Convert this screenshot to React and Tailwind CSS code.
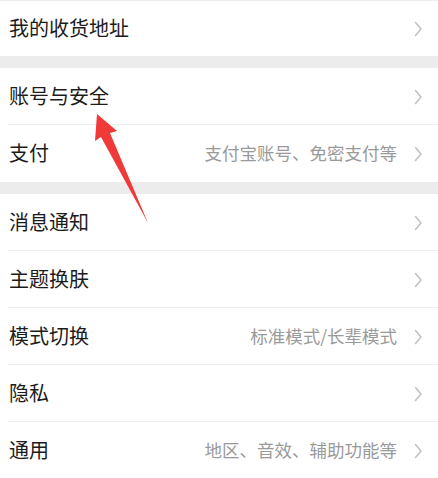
import React from "react";

const Chevron = () => (
  <svg width="10" height="18" viewBox="0 0 10 18" className="shrink-0">
    <path d="M2.5 2.5 L8 9 L2.5 15.5" fill="none" stroke="#c2c2c2" strokeWidth="1.6" strokeLinecap="round" strokeLinejoin="round" />
  </svg>
);

const Row = ({ label, value, divider = true, h = "h-[57px]" }) => (
  <div className={`relative flex items-center bg-white ${h} pl-[9px] pr-[15px]`}>
    <span className="flex-1 text-[20px] text-[#1c1c1c] leading-none pb-[2px]">{label}</span>
    {value && <span className="text-[17.5px] text-[#9a9a9a] leading-none mr-[16px] pb-[2px]">{value}</span>}
    <Chevron />
    {divider && <div className="absolute left-[8px] right-0 bottom-0 h-px bg-[#ececec]" />}
  </div>
);

const Gap = () => <div className="h-[12px] bg-[#ececec]" />;

export default function App() {
  return (
    <div
      className="relative w-[438px] h-[478px] overflow-hidden bg-[#ececec]"
      style={{ fontFamily: '"Noto Sans CJK SC", "Noto Sans", sans-serif' }}
    >
      <div className="h-px bg-[#ececec] ml-[8px]" />
      <Row label="我的收货地址" divider={false} h="h-[55px]" />
      <Gap />
      <Row label="账号与安全" />
      <Row label="支付" value="支付宝账号、免密支付等" divider={false} />
      <Gap />
      <Row label="消息通知" />
      <Row label="主题换肤" />
      <Row label="模式切换" value="标准模式/长辈模式" />
      <Row label="隐私" />
      <Row label="通用" value="地区、音效、辅助功能等" divider={false} />
      <svg className="absolute left-0 top-0 pointer-events-none" width="438" height="478">
        <polygon
          points="97,114 117,131 110,133 148,223 101,137 95,141"
          fill="#f03a3a"
        />
      </svg>
    </div>
  );
}
